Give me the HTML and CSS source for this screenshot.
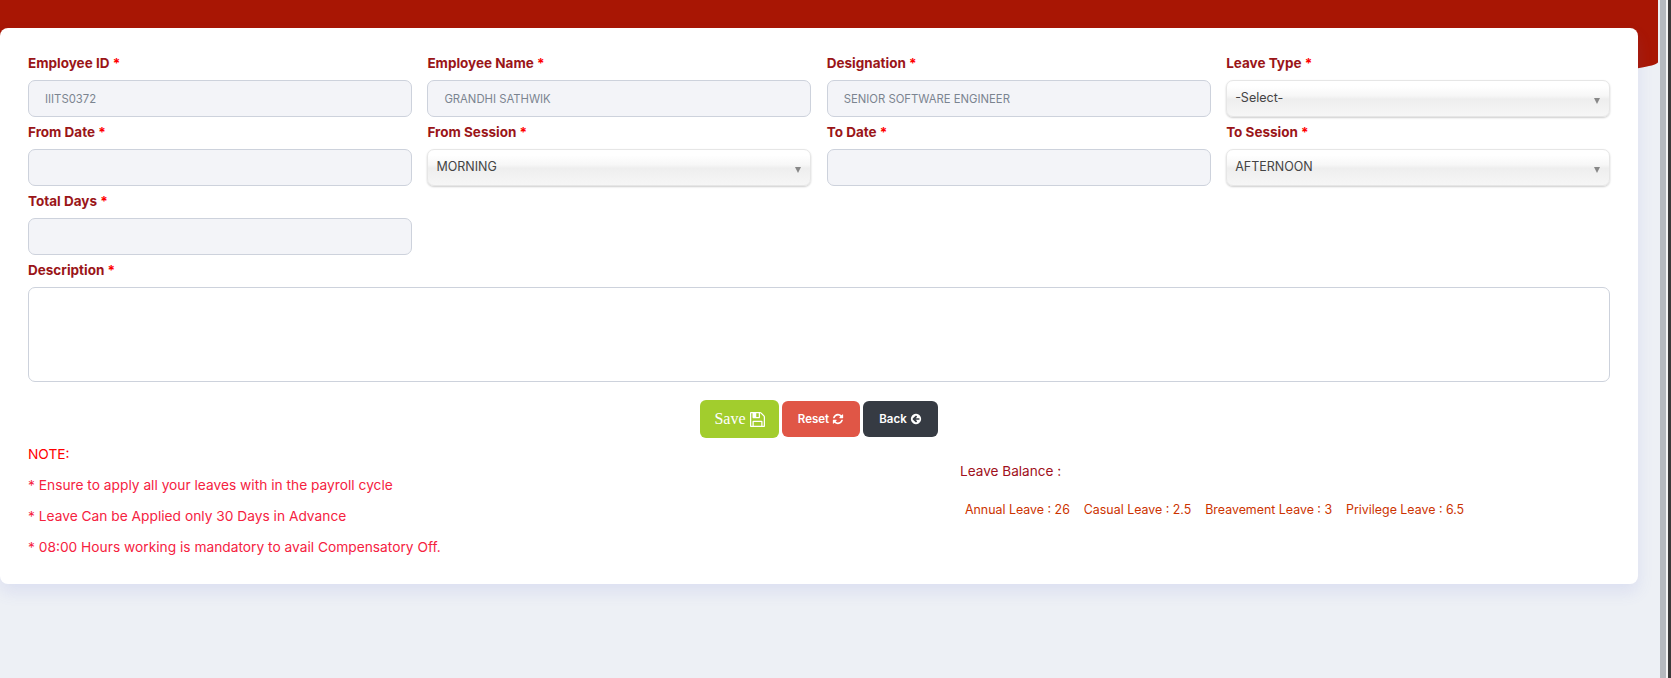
FILE: index.html
```html
<!DOCTYPE html>
<html lang="en">
<head>
    <meta charset="UTF-8">
    <title>Apply Leave</title>
    <link rel="stylesheet" href="styles.css">
</head>
<body>
    <div class="page">
        <div class="top-band"></div>
        <div class="card">
            <form class="form-grid">
                <div class="field">
                    <label>Employee ID <span class="req">*</span></label>
                    <input type="text" class="input" value="IIITS0372" readonly>
                </div>
                <div class="field">
                    <label>Employee Name <span class="req">*</span></label>
                    <input type="text" class="input" value="GRANDHI SATHWIK" readonly>
                </div>
                <div class="field">
                    <label>Designation <span class="req">*</span></label>
                    <input type="text" class="input" value="SENIOR SOFTWARE ENGINEER" readonly>
                </div>
                <div class="field">
                    <label>Leave Type <span class="req">*</span></label>
                    <div class="select-box"><span>-Select-</span></div>
                </div>

                <div class="field">
                    <label>From Date <span class="req">*</span></label>
                    <input type="text" class="input">
                </div>
                <div class="field">
                    <label>From Session <span class="req">*</span></label>
                    <div class="select-box"><span>MORNING</span></div>
                </div>
                <div class="field">
                    <label>To Date <span class="req">*</span></label>
                    <input type="text" class="input">
                </div>
                <div class="field">
                    <label>To Session <span class="req">*</span></label>
                    <div class="select-box"><span>AFTERNOON</span></div>
                </div>

                <div class="field">
                    <label>Total Days <span class="req">*</span></label>
                    <input type="text" class="input">
                </div>

                <div class="field field-wide">
                    <label>Description <span class="req">*</span></label>
                    <textarea class="textarea"></textarea>
                </div>
            </form>

            <div class="button-row">
                <button type="button" class="btn btn-save">Save
                    <svg class="icon icon-save" viewBox="0 0 1536 1536"><path d="M384 1408h768v-384h-768v384zm896 0h128v-896q0-14-10-38.500t-20-34.500l-281-281q-10-10-34-20t-39-10v416q0 40-28 68t-68 28h-576q-40 0-68-28t-28-68v-416h-128v1280h128v-416q0-40 28-68t68-28h832q40 0 68 28t28 68v416zm-384-928v-320q0-13-9.500-22.500t-22.500-9.500h-192q-13 0-22.500 9.500t-9.500 22.500v320q0 13 9.500 22.500t22.500 9.500h192q13 0 22.500-9.500t9.500-22.500zm640 32v928q0 40-28 68t-68 28h-1344q-40 0-68-28t-28-68v-1344q0-40 28-68t68-28h928q40 0 88 20t76 48l280 280q28 28 48 76t20 88z"/></svg>
                </button>
                <button type="button" class="btn btn-reset">Reset
                    <svg class="icon" viewBox="0 0 1792 1792"><path d="M1639 1056q0 5-1 7-64 268-268 434.500t-478 166.500q-146 0-282.500-55t-243.500-157l-129 129q-19 19-45 19t-45-19-19-45v-448q0-26 19-45t45-19h448q26 0 45 19t19 45-19 45l-137 137q71 66 161 102t187 36q134 0 250-65t186-179q11-17 53-117 8-23 30-23h192q13 0 22.500 9.500t9.500 22.500zm25-800v448q0 26-19 45t-45 19h-448q-26 0-45-19t-19-45 19-45l138-138q-148-137-349-137-134 0-250 65t-186 179q-11 17-53 117-8 23-30 23h-199q-13 0-22.500-9.500t-9.500-22.500v-7q65-268 270-434.500t480-166.500q146 0 284 55.500t245 156.500l130-129q19-19 45-19t45 19 19 45z"/></svg>
                </button>
                <button type="button" class="btn btn-back">Back
                    <svg class="icon" viewBox="0 0 1792 1792"><path d="M1408 960v-128q0-26-19-45t-45-19h-502l189-189q19-19 19-45t-19-45l-91-91q-18-18-45-18t-45 18l-362 362-91 91q-18 18-18 45t18 45l91 91 362 362q18 18 45 18t45-18l91-91q18-18 18-45t-18-45l-189-189h502q26 0 45-19t19-45zm256-64q0 209-103 385.500t-279.500 279.500-385.500 103-385.500-103-279.500-279.500-103-385.500 103-385.500 279.500-279.500 385.500-103 385.500 103 279.500 279.500 103 385.500z"/></svg>
                </button>
            </div>

            <div class="info-row">
                <div class="notes">
                    <p class="note-title">NOTE:</p>
                    <p>* Ensure to apply all your leaves with in the payroll cycle</p>
                    <p>* Leave Can be Applied only 30 Days in Advance</p>
                    <p>* 08:00 Hours working is mandatory to avail Compensatory Off.</p>
                </div>
                <div class="balance">
                    <p class="balance-title">Leave Balance :</p>
                    <div class="balance-list">
                        <span>Annual Leave : 26</span>
                        <span>Casual Leave : 2.5</span>
                        <span>Breavement Leave : 3</span>
                        <span>Privilege Leave : 6.5</span>
                    </div>
                </div>
            </div>
        </div>
    </div>
    <div class="scroll-track"></div>
</body>
</html>
```

FILE: styles.css
```css
html, body {
    height: 100%;
}
body {
    margin: 0;
    display: flex;
    overflow: hidden;
    font-family: Inter, "Open Sans", sans-serif;
    background-color: #edf0f5;
}
.page {
    flex: 1;
    min-width: 0;
}
.scroll-track {
    width: 11px;
    background: linear-gradient(to right, #b6babf 6px, #f4f4f4 6px, #f4f4f4 8px, #3a3a3a 8px);
}
.top-band {
    height: 90px;
    margin-right: 2px;
    background-color: #a81604;
    border-radius: 0 0 829px 829px / 0 0 28px 28px;
}
.card {
    margin: -62px 22px 0 0;
    height: 556px;
    box-sizing: border-box;
    padding: 26px 28px 0;
    background-color: #fff;
    border-radius: 8px;
    box-shadow: 0 8px 16px rgba(100, 110, 210, 0.12);
}
.form-grid {
    display: grid;
    grid-template-columns: repeat(4, 1fr);
    column-gap: 15.5px;
}
.field {
    margin-bottom: 6px;
}
.field-wide {
    grid-column: 1 / -1;
    margin-bottom: 5px;
}
.field label {
    display: block;
    height: 19px;
    line-height: 19px;
    margin-bottom: 7px;
    font-size: 13.5px;
    font-weight: 700;
    color: #9a1518;
}
.req {
    color: #f00;
}
.input {
    display: block;
    width: 100%;
    height: 37px;
    box-sizing: border-box;
    padding: 0 16px;
    font-family: inherit;
    font-size: 11.3px;
    color: #7b8490;
    background-color: #f3f4f8;
    border: 1px solid #cdd2dc;
    border-radius: 7px;
    outline: none;
}
.select-box {
    position: relative;
    height: 37px;
    box-sizing: border-box;
    padding: 0 8px;
    line-height: 33px;
    font-size: 12.5px;
    color: #444;
    background: linear-gradient(#fff 15%, #f7f7f7 42%, #eee 52%, #f6f6f6 100%);
    border: 1px solid #e6e6e6;
    border-radius: 7px;
    box-shadow: 0 1px 2px rgba(0, 0, 0, 0.2);
}
.select-box::after {
    content: "";
    position: absolute;
    right: 9px;
    top: 17px;
    border-left: 3.5px solid transparent;
    border-right: 3.5px solid transparent;
    border-top: 6px solid #888;
}
.textarea {
    display: block;
    width: 100%;
    height: 95px;
    box-sizing: border-box;
    resize: none;
    background-color: #fff;
    border: 1px solid #cdd2dc;
    border-radius: 7px;
    outline: none;
}
.button-row {
    display: flex;
    justify-content: center;
    align-items: center;
    gap: 3px;
    margin-top: 13px;
}
.btn {
    display: flex;
    justify-content: center;
    align-items: center;
    gap: 3px;
    height: 36px;
    padding: 0;
    border: none;
    border-radius: 6px;
    color: #fff;
    font-family: inherit;
    font-size: 11.5px;
    font-weight: 600;
    cursor: pointer;
}
.btn-save {
    width: 79px;
    height: 38px;
    gap: 4px;
    font-family: "Liberation Serif", serif;
    font-size: 16px;
    font-weight: 400;
    background-color: #a2cd2d;
}
.btn-reset {
    width: 78px;
    background-color: #e05646;
}
.btn-back {
    width: 75px;
    background-color: #363b43;
}
.icon {
    width: 12px;
    height: 12px;
    fill: #fff;
}
.icon-save {
    width: 15px;
    height: 15px;
}
.info-row {
    display: grid;
    grid-template-columns: 932px 1fr;
    margin-top: 6px;
}
.notes p {
    margin: 0 0 11px;
    height: 20px;
    line-height: 20px;
    font-size: 13.75px;
    color: #f5223f;
}
.notes .note-title {
    color: #f00;
}
.balance {
    padding-top: 17px;
}
.balance-title {
    margin: 0;
    height: 20px;
    line-height: 20px;
    font-size: 13.6px;
    color: #a01020;
}
.balance-list {
    display: flex;
    gap: 14px;
    margin-top: 19px;
    padding-left: 5px;
    font-size: 12.4px;
    line-height: 20px;
    color: #cc3300;
}
```
